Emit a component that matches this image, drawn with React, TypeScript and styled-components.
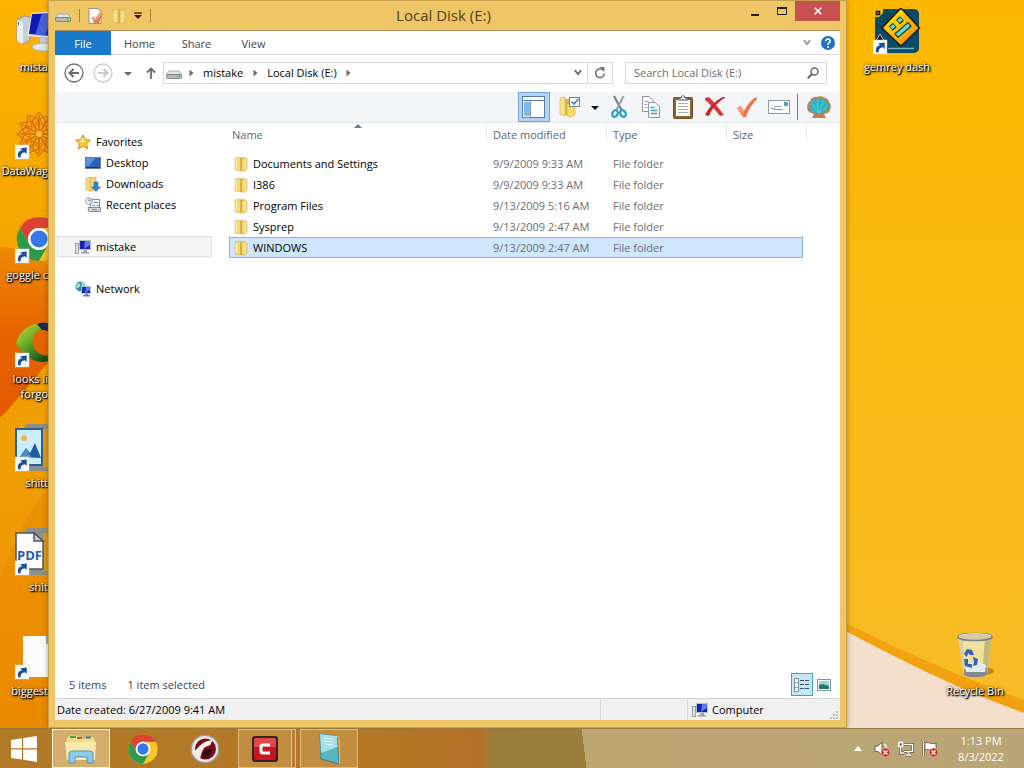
import React from "react";
import styled, { createGlobalStyle, css } from "styled-components";

const FONT = `"Open Sans", "Noto Sans", sans-serif`;

const GlobalStyle = createGlobalStyle`
  *, *::before, *::after { box-sizing: border-box; }
  html, body, #root { height: 100%; }
  body { margin: 0; overflow: hidden; font-family: ${FONT}; font-size: 11px; line-height: 15px; color: #000; }
  button, input { font: inherit; color: inherit; }
  button { border: 0; padding: 0; background: none; display: flex; align-items: center; justify-content: center; }
  a { color: inherit; text-decoration: none; }
  svg { display: block; flex: none; }
`;

/* ---------- desktop ---------- */

const Screen = styled.div`
  height: 100vh;
  display: flex;
  flex-direction: column;
  position: relative;
`;

const Wallpaper = styled.svg`
  position: absolute;
  inset: 0;
  width: 100%;
  height: 100%;
`;

const Desktop = styled.div`
  flex: 1;
  min-height: 0;
  display: flex;
  position: relative;
`;

const LeftIcons = styled.div`
  width: 48px;
  flex: none;
  overflow: hidden;
`;

const RightIcons = styled.div`
  flex: none;
  display: grid;
  grid-template-columns: 78px 78px;
  grid-auto-rows: 104px;
  padding: 0 10px 0 11px;
`;

const Shortcut = styled.a<{ $column?: number; $row?: number }>`
  display: flex;
  flex-direction: column;
  gap: 3px;
  height: 104px;
  padding-top: 8px;
  color: #fff;
  ${(p) => p.$column && css`grid-column: ${p.$column};`}
  ${(p) => p.$row && css`grid-row: ${p.$row};`}
`;

const ClippedShortcut = styled(Shortcut)`
  padding-left: 15px;
  align-items: flex-start;
`;

const CentredShortcut = styled(Shortcut)`
  align-items: center;
`;

const ShortcutLabel = styled.span`
  white-space: pre;
  text-align: center;
  text-shadow: 1px 1px 1px #000, 1px 1px 2px #000, 0 0 3px rgba(0, 0, 0, 0.7);
`;

const EdgeLabel = styled(ShortcutLabel)`
  align-self: flex-end;
  text-align: right;
`;

/* ---------- window ---------- */

const Window = styled.main`
  flex: 1;
  min-width: 0;
  display: flex;
  flex-direction: column;
  padding: 0 6px 7px;
  background: #efc666;
  border: 1px solid #c9a04a;
  box-shadow: 0 0 5px rgba(90, 50, 0, 0.45);
`;

const TitleBar = styled.header`
  height: 29px;
  flex: none;
  display: grid;
  grid-template-columns: 1fr auto 1fr;
`;

const QuickAccess = styled.div`
  display: flex;
  align-items: center;
  gap: 8px;
`;

const QuickDivider = styled.span`
  width: 1px;
  height: 13px;
  background: #a9813a;
`;

const Title = styled.h1`
  margin: 0;
  padding-right: 8px;
  font-size: 15px;
  font-weight: 400;
  line-height: 28px;
  color: #54401f;
`;

const WindowControls = styled.div`
  display: flex;
  justify-content: flex-end;
  align-items: flex-start;
`;

const WindowButton = styled.button<{ $close?: boolean }>`
  width: ${(p) => (p.$close ? 45 : 27)}px;
  height: 20px;
  background: ${(p) => (p.$close ? "#c75050" : "none")};
`;

const Content = styled.div`
  flex: 1;
  min-height: 0;
  display: flex;
  flex-direction: column;
  background: #fff;
  border-top: 1px solid #b0905a;
`;

const TabRow = styled.nav`
  height: 24px;
  flex: none;
  display: flex;
  border-bottom: 1px solid #dadbdc;
`;

const Tab = styled.button<{ $file?: boolean }>`
  width: ${(p) => (p.$file ? 56 : 57)}px;
  height: ${(p) => (p.$file ? 24 : 25)}px;
  color: ${(p) => (p.$file ? "#fff" : "#444")};
  background: ${(p) => (p.$file ? "#1979ca" : "none")};
`;

const TabTools = styled.div`
  margin-left: auto;
  padding-right: 5px;
  display: flex;
  align-items: center;
  gap: 10px;
`;

const NavRow = styled.div`
  flex: none;
  display: flex;
  align-items: center;
  height: 37px;
  padding: 0 13px 2px 8px;
`;

const NavButtons = styled.div`
  display: flex;
  gap: 7px;
  margin-right: 3px;
`;

const NavButton = styled.button<{ $width: number }>`
  width: ${(p) => p.$width}px;
  height: 22px;
`;

const AddressBar = styled.div`
  flex: 1;
  min-width: 0;
  height: 22px;
  display: flex;
  align-items: center;
  padding-left: 2px;
  border: 1px solid #d9d9d9;
`;

const Crumb = styled.button`
  padding: 0 3px;
  height: 20px;
  white-space: nowrap;
`;

const CrumbArrow = styled.span`
  width: 18px;
  display: flex;
  justify-content: center;
`;

const AddressTools = styled.div`
  margin-left: auto;
  display: flex;
`;

const AddressButton = styled.button<{ $divided?: boolean }>`
  width: ${(p) => (p.$divided ? 25 : 19)}px;
  height: 20px;
  border-left: ${(p) => (p.$divided ? "1px solid #d9d9d9" : "0")};
`;

const SearchBox = styled.label`
  width: 202px;
  height: 22px;
  margin-left: 12px;
  display: flex;
  align-items: center;
  padding: 0 7px 0 8px;
  border: 1px solid #d9d9d9;
`;

const SearchInput = styled.input`
  flex: 1;
  min-width: 0;
  border: 0;
  padding: 0;
  outline: 0;
  background: none;
  &::placeholder { color: #6d6d6d; opacity: 1; }
`;

const ToolBar = styled.div`
  height: 31px;
  flex: none;
  display: flex;
  justify-content: flex-end;
  align-items: center;
  padding-right: 5px;
  background: #f4f5f7;
  border-bottom: 1px solid #e3e8ee;
`;

const ToolButton = styled.button<{ $active?: boolean }>`
  width: 32px;
  height: 30px;
  border: 1px solid ${(p) => (p.$active ? "#6ba3dc" : "transparent")};
  background: ${(p) => (p.$active ? "#b5d3f5" : "none")};
`;

const SplitButton = styled.button`
  width: 53px;
  height: 30px;
  gap: 10px;
  padding-left: 5px;
`;

const ToolDivider = styled.span`
  width: 1px;
  height: 26px;
  margin: 0 5px 0 2px;
  background: #777;
`;

const Panes = styled.div`
  flex: 1;
  min-height: 0;
  display: flex;
`;

const Sidebar = styled.nav`
  width: 174px;
  flex: none;
  padding: 8px 17px 0 2px;
  display: flex;
  flex-direction: column;
  gap: 21px;
`;

const PlaceGroup = styled.div`
  display: flex;
  flex-direction: column;
`;

const Place = styled.a<{ $nested?: boolean; $current?: boolean }>`
  height: 21px;
  display: flex;
  align-items: center;
  gap: 5px;
  padding-left: ${(p) => (p.$nested ? 27 : 17)}px;
  border: 1px solid ${(p) => (p.$current ? "#dedede" : "transparent")};
  background: ${(p) => (p.$current ? "#f5f5f5" : "none")};
`;

const Listing = styled.section`
  flex: 1;
  min-width: 0;
`;

const FileTable = styled.table`
  width: 578px;
  table-layout: fixed;
  border-collapse: collapse;
`;

const HeadCell = styled.th<{ $width: number; $sorted?: boolean; $open?: boolean }>`
  position: relative;
  width: ${(p) => p.$width}px;
  height: 30px;
  padding: 0 0 0 ${(p) => (p.$sorted ? 3 : 6)}px;
  vertical-align: top;
  text-align: left;
  font-weight: 400;
  line-height: 24px;
  color: #5a6473;
  ${(p) => !p.$open && css`background: linear-gradient(#e4e8ed, #e4e8ed) right top / 1px 16px no-repeat;`}
`;

const EndCell = styled.td<{ $width: number }>`
  width: ${(p) => p.$width}px;
  padding: 0;
  background: linear-gradient(#e4e8ed, #e4e8ed) right top / 1px 16px no-repeat;
`;

const SortMark = styled.svg`
  position: absolute;
  top: 1px;
  left: 50%;
  transform: translateX(-50%);
`;

const Cell = styled.td`
  padding: 0 0 0 6px;
  color: #6d6d6d;
  white-space: nowrap;
`;

const NameCell = styled(Cell)`
  padding-left: 5px;
  color: #000;
`;

const FileRow = styled.tr<{ $selected?: boolean }>`
  height: 21px;
  ${(p) =>
    p.$selected &&
    css`
      ${Cell} {
        background: #cee6ff;
        box-shadow: inset 0 1px #84b4e0, inset 0 -1px #84b4e0;
      }
      ${Cell}:first-child { box-shadow: inset 0 1px #84b4e0, inset 0 -1px #84b4e0, inset 1px 0 #84b4e0; }
      ${Cell}:last-child { box-shadow: inset 0 1px #84b4e0, inset 0 -1px #84b4e0, inset -1px 0 #84b4e0; }
    `}
`;

const FileName = styled.span`
  display: flex;
  align-items: center;
  gap: 5px;
`;

const DetailsRow = styled.div`
  height: 25px;
  flex: none;
  display: flex;
  align-items: center;
  gap: 21px;
  padding: 0 5px 2px 14px;
  color: #34445c;
`;

const ViewSwitch = styled.div`
  margin-left: auto;
  display: flex;
`;

const ViewButton = styled.button<{ $active?: boolean }>`
  width: 22px;
  height: 23px;
  border: 1px solid ${(p) => (p.$active ? "#3aa3cf" : "transparent")};
  background: ${(p) => (p.$active ? "#c4e6f5" : "none")};
`;

const StatusBar = styled.footer`
  height: 22px;
  flex: none;
  display: flex;
  background: #f0f0f0;
  border-top: 1px solid #d5d5d5;
`;

const StatusField = styled.div<{ $width?: number }>`
  flex: ${(p) => (p.$width ? `0 0 ${p.$width}px` : "1")};
  display: flex;
  align-items: center;
  gap: 4px;
  padding-left: ${(p) => (p.$width ? 4 : 2)}px;
  border-left: ${(p) => (p.$width ? "1px solid #d7d7d7" : "0")};
`;

const SizeGrip = styled.svg`
  margin: auto 1px 0 auto;
`;

/* ---------- taskbar ---------- */

const TaskBar = styled.footer`
  height: 40px;
  flex: none;
  position: relative;
  display: flex;
  align-items: stretch;
  color: #fff;
  border-top: 1px solid #96793f;
  background:
    linear-gradient(83deg, transparent 57%, #bda673 57%, #b9a577 100%),
    linear-gradient(90deg, #b17a26 0, #b37827 36%, #b46f26 47%, #9b7e3b 48%, #9c7f3d 100%);
`;

const StartButton = styled.button`
  width: 48px;
  margin-right: 4px;
`;

const TaskButtons = styled.div`
  display: flex;
  gap: 4px;
`;

const TaskButton = styled.button<{ $state?: "active" | "open" | "stacked" }>`
  width: 58px;
  border: 1px solid transparent;
  ${(p) =>
    p.$state === "active" &&
    css`
      border-color: #fff3d8;
      background: rgba(255, 236, 200, 0.45);
    `}
  ${(p) =>
    (p.$state === "open" || p.$state === "stacked") &&
    css`
      border-color: rgba(255, 226, 170, 0.55);
      background: rgba(255, 226, 170, 0.2);
    `}
  ${(p) =>
    p.$state === "stacked" &&
    css`
      box-shadow: inset -3px 0 0 rgba(176, 120, 50, 0.9), inset -4px 0 0 rgba(255, 226, 170, 0.6);
      padding-right: 4px;
    `}
`;

const Tray = styled.div`
  margin-left: auto;
  display: flex;
  align-items: center;
`;

const TrayIcons = styled.div`
  display: flex;
  gap: 8px;
`;

const TrayButton = styled.button`
  width: 16px;
  height: 24px;
`;

const Clock = styled.time`
  width: 86px;
  text-align: center;
  line-height: 16px;
`;

/* ---------- drawings ---------- */

const Arrow = ({ y = 33 }: { y?: number }) => (
  <g transform={`translate(0 ${y})`}>
    <rect width="14" height="14" fill="#fbfbf8" stroke="#d8d8d8" strokeWidth=".5" />
    <path d="M3.2 12.2C2.2 8.2 4 5.6 7 5.3L5.4 3.2 11.8 2.4 11.6 9 9.8 7.2C7 7.6 5.4 9 5.6 12.4Z" fill="#1d4f9c" />
  </g>
);

const ComputerBig = () => (
  <svg width="48" height="48" viewBox="0 0 48 48">
    <path d="M2 12 9 8 15 9V32L8 36 2 33Z" fill="#c9ced3" stroke="#8f979e" />
    <path d="M2 12 8 14V36L2 33Z" fill="#eceff1" />
    <path d="M3.500 14v3" stroke="#456" />
    <path d="M16 5 46 3V31L12 28Z" fill="#dbe6f2" />
    <path d="M17 6 45 5V29L14 26Z" fill="#1119b5" />
    <path d="M27 5 38 5 30 28 20 27Z" fill="#5a78ea" opacity=".75" />
    <path d="M25 30h9v8h-9z" fill="#c4ccd3" />
    <ellipse cx="29" cy="39" rx="12" ry="4" fill="#dfe5e9" stroke="#a8b0b6" />
  </svg>
);

const Mandala = () => (
  <svg width="48" height="48" viewBox="0 0 48 48">
    <g fill="none" stroke="#d9701a" strokeWidth="1.300">
      {[0, 30, 60, 90, 120, 150, 180, 210, 240, 270, 300, 330].map((a) => (
        <g key={a} transform={`rotate(${a} 24 22)`}>
          <path d="M24 22 17 9 24 0 31 9Z" />
          <path d="M24 14 14 6M24 14 34 6" strokeWidth=".9" />
        </g>
      ))}
    </g>
    <circle cx="24" cy="22" r="3" fill="#ffc62a" />
    <Arrow />
  </svg>
);

const ChromeShapes = () => (
  <>
    <circle cx="24" cy="24" r="22" fill="#f9c62b" />
    <path d="M4.900 13A22 22 0 0 1 43.100 13L24 13A11 11 0 0 0 14.500 29.500Z" fill="#dd4236" />
    <path d="M4.900 13 14.500 29.500A11 11 0 0 0 33.500 29.500L24 46A22 22 0 0 1 4.900 13Z" fill="#2c9a4b" />
    <circle cx="24" cy="24" r="11" fill="#fff" />
    <circle cx="24" cy="24" r="8.500" fill="#3479e8" />
  </>
);

const ChromeBig = () => (
  <svg width="48" height="48" viewBox="0 0 48 48">
    <g transform="translate(0 -1)"><ChromeShapes /></g>
    <Arrow />
  </svg>
);

const Swirl = () => (
  <svg width="48" height="48" viewBox="0 0 48 48">
    <defs>
      <linearGradient id="swirl" x1="0" y1="0" x2="1" y2="1">
        <stop offset="0" stopColor="#e6dc3c" />
        <stop offset=".35" stopColor="#6db12b" />
        <stop offset=".8" stopColor="#0c4a1c" />
      </linearGradient>
    </defs>
    <path d="M1 24C4 10 16 3 28 3 38 3 46 12 46 22 46 34 36 43 26 42 14 41 8 32 1 24ZM29 9C20 10 16 17 18 25 20 33 28 37 36 35 42 31 42 17 36 11Z" fill="url(#swirl)" fillRule="evenodd" />
    <path d="M22 4C30 1 42 3 46 14L40 20C37 13 33 10 27 10Z" fill="#132a5c" />
    <Arrow />
  </svg>
);

const PictureFile = () => (
  <svg width="48" height="48" viewBox="0 0 48 48">
    <path d="M9 3 14 -1H48V47H12Z" fill="#8f8d87" />
    <path d="M28 5H48V43H28Z" fill="#dd981c" />
    <rect x="1" y="5" width="26" height="36" fill="#c8effb" stroke="#2c5f8f" strokeWidth="2" />
    <circle cx="9" cy="14" r="3" fill="#f3b252" />
    <path d="M5 33 11 24 15 29 20 19 26 34Z" fill="#1e5fa0" />
    <path d="M5 33 11 24 16 33Z" fill="#4a8bc6" />
    <Arrow />
  </svg>
);

const PdfText = styled.text`
  font: 700 13px ${FONT};
  fill: #1e5fa8;
`;

const PdfFile = () => (
  <svg width="48" height="48" viewBox="0 0 48 48">
    <path d="M9 3 14 -1H48V47H12Z" fill="#8f8d87" />
    <path d="M28 5H48V43H28Z" fill="#dd981c" />
    <path d="M1 5H19L28 13V41H1Z" fill="#fdfdfd" stroke="#4b5563" strokeWidth="1.500" />
    <path d="M19 5V13H28Z" fill="#c5cad0" stroke="#4b5563" strokeWidth="1.500" />
    <PdfText x="2" y="32">PDF</PdfText>
    <Arrow />
  </svg>
);

const BlankFile = () => (
  <svg width="48" height="48" viewBox="0 0 48 48">
    <path d="M8 4H40V45H8Z" fill="#fbfbfb" />
    <path d="M31 4h3v8h-3z" fill="#a0a5a8" />
    <Arrow />
  </svg>
);

const DashGame = () => (
  <svg width="48" height="48" viewBox="0 0 48 48">
    <defs>
      <linearGradient id="dash" x1="0" y1="0" x2="1" y2="1">
        <stop offset=".3" stopColor="#ffd400" />
        <stop offset="1" stopColor="#ff7d1e" />
      </linearGradient>
    </defs>
    <rect x="2" y="1" width="44" height="44" rx="5" fill="#0e4a63" />
    <path d="M2 18h44M14 1v44" stroke="#0a3549" />
    <path d="M2 1H10V5L6 9H2Z" fill="#f3b91c" />
    <path d="M3.500 3.500H6.500V6.500H3.500Z" fill="none" stroke="#111" strokeWidth="1.500" />
    <path d="M28 0 46.500 20 28 38 9 20Z" fill="url(#dash)" stroke="#1d1d1d" strokeWidth="1.500" />
    <g fill="none" stroke="#1b3c3c" strokeWidth="6">
      <path d="M17.700 20.500 21.700 17M25 14 29 10.500M23 28 37 16" />
    </g>
    <g fill="none" stroke="#5fe0d0" strokeWidth="3.500">
      <path d="M18.200 20 21.200 17.500M25.500 13.500 28.500 11M24 27.200 36 16.800" />
    </g>
    <path d="M7 26 3 33H11Z" fill="#111" stroke="#fff" strokeWidth=".7" />
    <path d="M15 40.500h26" stroke="#6cb6d0" strokeWidth="1.500" />
    <Arrow y={32} />
  </svg>
);

const Bin = () => (
  <svg width="48" height="48" viewBox="0 0 48 48">
    <ellipse cx="32" cy="39" rx="11" ry="4" fill="#6a520c" opacity=".45" />
    <path d="M7 5H41L36 43C31 46 17 46 13 43Z" fill="#f0e09a" />
    <path d="M34 6H41L36 43 31 45Z" fill="#c3b878" />
    <path d="M7 5H11L16 44 13 43Z" fill="#d6cfa6" />
    <path d="M13 37 36 36 36 43C31 46 17 46 13 43Z" fill="#828b92" />
    <path d="M14 34C20 29 30 30 35 33L34 40H15Z" fill="#e3eaf0" />
    <ellipse cx="24" cy="5" rx="17" ry="3.500" fill="#d2cda6" stroke="#7a8286" strokeWidth="1.500" />
    <path d="M8 4C14 1 34 1 40 4" stroke="#f4f5f0" fill="none" />
    <path d="M13 22 16 17 21 18 23 23 19 23 17 21 16 25ZM22 25 27 27 26 33 22 34 23 30ZM13 27 17 27 17 32 21 32V36L14 34Z" fill="#2f62c4" />
  </svg>
);

const Drive = () => (
  <svg width="16" height="16" viewBox="0 0 16 16">
    <path d="M3 6H13L15.500 9.500H.500Z" fill="#e4e6e6" stroke="#9aa0a0" strokeWidth=".8" />
    <rect x=".5" y="9.500" width="15" height="4" rx="1" fill="#b4bab9" stroke="#6f7675" strokeWidth=".8" />
    <rect x="11" y="10.500" width="3" height="2" fill="#59c46a" />
  </svg>
);

const Folder = () => (
  <svg width="14" height="16" viewBox="0 0 14 16">
    <path d="M1 2 7 1V15L1 14Z" fill="#f3d874" stroke="#dcb850" strokeWidth=".6" />
    <path d="M6 1.500H10V15H6Z" fill="#dcb145" />
    <path d="M8 3 11 1.500 13 3V13L10 15.500 8 14.500Z" fill="#f5df8c" stroke="#cfa94a" strokeWidth=".6" />
    <path d="M2.500 3V13" stroke="#fdf0b4" strokeWidth="1.500" />
  </svg>
);

const CheckedPage = () => (
  <svg width="16" height="16" viewBox="0 0 16 16">
    <path d="M1 .5H10L13 4V15.500H1Z" fill="#fff" stroke="#9a8f86" />
    <path d="M4 10 7 13 15 5 11 15H6Z" fill="#e57846" />
    <path d="M4 9 7 12 14 3" stroke="#ef9a72" strokeWidth="2" fill="none" />
  </svg>
);

const DownMark = ({ bar, color = "#333" }: { bar?: boolean; color?: string }) => (
  <svg width="8" height="8" viewBox="0 0 8 8">
    {bar && <path d="M0 1h8" stroke={color} strokeWidth="1.300" />}
    <path d="M0 3H8L4 7Z" fill={color} />
  </svg>
);

const Chevron = ({ color = "#888" }: { color?: string }) => (
  <svg width="8" height="7" viewBox="0 0 8 7">
    <path d="M.8 1.200 4 5 7.200 1.200" stroke={color} strokeWidth="1.800" fill="none" />
  </svg>
);

const RightMark = () => (
  <svg width="5" height="8" viewBox="0 0 5 8">
    <path d="M.5.5V7.500L4.500 4Z" fill="#6a6a6a" />
  </svg>
);

const CircleArrow = ({ color, flip }: { color: string; flip?: boolean }) => (
  <svg width="20" height="20" viewBox="0 0 20 20">
    <g transform={flip ? "rotate(180 10 10)" : undefined} fill="none" stroke={color}>
      <circle cx="10" cy="10" r="9" strokeWidth="1.300" />
      <path d="M15 10H6M9.500 6 5.500 10 9.500 14" strokeWidth="2" />
    </g>
  </svg>
);

const UpArrow = () => (
  <svg width="10" height="12" viewBox="0 0 10 12">
    <path d="M5 12V1.500M1 5.500 5 1.500 9 5.500" stroke="#6b6b6b" strokeWidth="1.800" fill="none" />
  </svg>
);

const Refresh = () => (
  <svg width="12" height="12" viewBox="0 0 12 12">
    <path d="M9.500 3.500A4.400 4.400 0 1 0 10.400 6.500" stroke="#767676" strokeWidth="1.600" fill="none" />
    <path d="M5.500 0H10.500V5Z" fill="#767676" />
  </svg>
);

const Magnifier = () => (
  <svg width="12" height="12" viewBox="0 0 12 12">
    <circle cx="7.500" cy="4.500" r="3.500" stroke="#666" strokeWidth="1.500" fill="none" />
    <path d="M5 7 .8 11.200" stroke="#666" strokeWidth="2" />
  </svg>
);

const Help = () => (
  <svg width="14" height="14" viewBox="0 0 14 14">
    <circle cx="7" cy="7" r="7" fill="#1f72bd" />
    <path d="M4.800 5.300C4.900 2.300 9.300 2.500 9.200 5.100 9.100 6.700 7 6.700 7 8.800" stroke="#fff" strokeWidth="1.500" fill="none" />
    <circle cx="7" cy="11" r="1" fill="#fff" />
  </svg>
);

const PaneIcon = () => (
  <svg width="24" height="22" viewBox="0 0 24 22">
    <rect x=".5" y=".5" width="22" height="21" fill="#fff" stroke="#5b7ea6" />
    <path d="M1 4.500H22" stroke="#5b7ea6" />
    <rect x="2" y="6" width="6" height="14" fill="#7db8ee" />
    <path d="M8.500 5V21" stroke="#8aa4c0" />
  </svg>
);

const FolderOptions = () => (
  <svg width="22" height="22" viewBox="0 0 22 22">
    <path d="M1 2 6 1V20L1 18Z" fill="#f6e38e" stroke="#d5b54f" strokeWidth=".6" />
    <path d="M6 3H14V19H6Z" fill="#dcb348" />
    <path d="M8 8 16 5V19L11 21 8 20Z" fill="#f4dc6c" stroke="#d2ae3b" strokeWidth=".6" />
    <rect x="10.500" y="1.500" width="10" height="9" fill="#fff" stroke="#6b7f93" />
    <path d="M12.500 5.500 15 8 19.500 3" stroke="#2d7fc0" strokeWidth="1.600" fill="none" />
  </svg>
);

const Scissors = () => (
  <svg width="16" height="24" viewBox="0 0 16 24">
    <path d="M3 1 10.500 15" stroke="#75818c" strokeWidth="2.200" />
    <path d="M12.500 1 5.500 15" stroke="#9aa5ae" strokeWidth="2.200" />
    <g fill="none" stroke="#2aa0c8" strokeWidth="2.300">
      <ellipse cx="4" cy="18.500" rx="2.600" ry="3.500" transform="rotate(25 4 18.500)" />
      <ellipse cx="12" cy="18.500" rx="2.600" ry="3.500" transform="rotate(-25 12 18.500)" />
    </g>
  </svg>
);

const CopyPages = () => (
  <svg width="20" height="22" viewBox="0 0 20 22">
    <g fill="#fdfdfd" stroke="#8b959e">
      <path d="M1.500.5H8L12 4V15.500H1.500Z" />
      <path d="M7.500 6.500H14L18.500 10.500V21.500H7.500Z" />
    </g>
    <path d="M3.500 5.500h4M3.500 8.500h3M3.500 11.500h3" stroke="#9aa7b1" />
    <path d="M9.500 11.500h4M9.500 14.500h7M9.500 17.500h7" stroke="#3d9fb8" strokeWidth="1.300" />
  </svg>
);

const Clipboard = () => (
  <svg width="20" height="24" viewBox="0 0 20 24">
    <rect x=".5" y="2.500" width="19" height="21" rx="1" fill="#8f6430" stroke="#6e4a20" />
    <rect x="3" y="5" width="14" height="16" fill="#fbfbf6" />
    <path d="M5 8.500h10M5 11.500h10M5 14.500h10M5 17.500h10" stroke="#a9b0b3" />
    <path d="M5 5V3H8C8 0 12 0 12 3H15V5Z" fill="#dfe3e4" stroke="#4c5357" />
  </svg>
);

const RedCross = () => (
  <svg width="22" height="22" viewBox="0 0 22 22">
    <path d="M1 2 5 1C9 5 15 12 20 19L16 20C11 14 6 8 1 4Z" fill="#da3a3d" />
    <path d="M22 1C15 5 8 12 5 20L1 19C5 11 12 4 19 1Z" fill="#c2262c" />
  </svg>
);

const OrangeCheck = () => (
  <svg width="22" height="22" viewBox="0 0 22 22">
    <path d="M1 12 5 10 8 15C11 9 15 4 20 1L21 3C16 8 12 14 10 21L7 21Z" fill="#ef7446" />
    <path d="M1 12 5 10 8 15 8 20Z" fill="#f59a72" />
  </svg>
);

const Mail = () => (
  <svg width="22" height="14" viewBox="0 0 22 14">
    <rect x=".5" y=".5" width="21" height="13" fill="#fbfcfd" stroke="#8f989f" />
    <rect x="16" y="2" width="4" height="4" fill="#47a7b9" />
    <path d="M3 8.500h4M6 6.500h7M6 9.500h9" stroke="#8e9ca8" />
  </svg>
);

const Shell = () => (
  <svg width="26" height="22" viewBox="0 0 26 22">
    <path d="M8 18 3 16C0 12 1 7 4 5 5 2 9 0 11 1 13 0 16 0 17 1 21 2 23 4 23 6 26 9 25 14 22 17L18 18 20 22H6Z" fill="#b98350" />
    <path d="M9 17 4 14C2 10 4 7 5 6 7 3 9 3 11 3 14 2 16 3 17 4 20 4 22 6 22 8 24 10 23 13 21 14L16 17Z" fill="#2fb5c4" />
    <path d="M12 17 6 7M12.500 17 11 4M13 17 17 5M13.500 17 21 10" stroke="#6fd6da" strokeWidth=".6" />
  </svg>
);

const Star = () => (
  <svg width="16" height="16" viewBox="0 0 16 16">
    <path d="M8 .8 10.200 5.600 15.400 6.200 11.500 9.600 12.700 15 8 12.200 3.300 15 4.500 9.600.6 6.200 5.800 5.600Z" fill="#ffc83a" stroke="#e08a1e" />
    <path d="M8 3.500 9.300 6.800 8 9 5 7Z" fill="#fff1b5" />
  </svg>
);

const Screenlet = () => (
  <svg width="16" height="16" viewBox="0 0 16 16">
    <rect x=".5" y="2.500" width="15" height="11" fill="#2a62b8" stroke="#6a7f99" />
    <path d="M1 3H10L4 11H1Z" fill="#5790dc" />
    <path d="M1 12.500h14" stroke="#15366e" />
  </svg>
);

const DownloadsIcon = () => (
  <svg width="16" height="16" viewBox="0 0 16 16">
    <path d="M1 2 6 1V15L1 14Z" fill="#f6dc83" stroke="#cfa848" strokeWidth=".6" />
    <path d="M5 2 11 1V13L7 15 5 14Z" fill="#f2d476" stroke="#cfa848" strokeWidth=".6" />
    <path d="M9 6H13V11H15.500L11 15.500 6.500 11H9Z" fill="#2c86cf" stroke="#1a5c9a" strokeWidth=".5" />
  </svg>
);

const RecentIcon = () => (
  <svg width="16" height="16" viewBox="0 0 16 16">
    <path d="M5.500 2.500H14.500V12.500H5.500Z" fill="#f4f7f9" stroke="#7f8c97" />
    <path d="M3 10.500H15.500V14.500H4Z" fill="#cfd8de" stroke="#7f8c97" />
    <path d="M9 5.500h4M8 8.500h2M12 8.500h2M7 12.500h5" stroke="#4f91b5" />
    <circle cx="4" cy="4" r="3.300" fill="#fff" stroke="#8c969d" />
    <path d="M4 2V4H6" stroke="#555" fill="none" strokeWidth=".8" />
  </svg>
);

const PcIcon = () => (
  <svg width="16" height="16" viewBox="0 0 16 16">
    <rect x=".5" y="4.500" width="3" height="10" fill="#dfe3e5" stroke="#868e93" strokeWidth=".8" />
    <rect x="4.500" y="1.500" width="11" height="9" fill="#1a1fb0" stroke="#b7bfc8" />
    <path d="M10 2H15V6L9 10Z" fill="#5c7ce4" />
    <path d="M8.500 11H12V13H8.500ZM6 13H14V14.500H6Z" fill="#9aa2a8" />
  </svg>
);

const NetworkIcon = () => (
  <svg width="16" height="16" viewBox="0 0 16 16">
    <circle cx="5.500" cy="5.500" r="5" fill="#2596ad" />
    <path d="M2 3C4 1 6 3 5 5S2 8 1 6ZM6 1C8 1 10 3 10 5H7Z" fill="#a5dcc8" />
    <rect x="6.500" y="5.500" width="9" height="7" fill="#1a2ab4" stroke="#b7c3d3" />
    <path d="M11 6H15V9L10 12Z" fill="#5c7ce4" />
    <path d="M10 13H13V14H15V15.500H8V14H10Z" fill="#6f7f8e" />
  </svg>
);

const DetailsView = () => (
  <svg width="16" height="14" viewBox="0 0 16 14">
    <path d="M.5.5H4.500V13.500H.500ZM.5 4.800H4.500M.5 9.200H4.500" fill="#fff" stroke="#7a8fa0" />
    <path d="M6 2.500h4M11 2.500h4M6 6.500h4M11 6.500h4M6 10.500h4M11 10.500h4" stroke="#34586f" />
  </svg>
);

const ThumbView = () => (
  <svg width="14" height="12" viewBox="0 0 14 12">
    <rect x=".5" y=".5" width="13" height="11" fill="#fff" stroke="#8095a3" />
    <rect x="2" y="2" width="10" height="8" fill="#9ed5e6" />
    <path d="M2 6 6 5 12 7V10H2Z" fill="#27756a" />
  </svg>
);

const WindowsLogo = () => (
  <svg width="28" height="28" viewBox="0 0 28 28">
    <path d="M1 5 12 3.300V13.300H1ZM13.200 3.100 27 1V13.300H13.200ZM1 14.500H12V24.600L1 23ZM13.200 14.500H27V26.900L13.200 24.800Z" fill="#fff" />
  </svg>
);

const ExplorerIcon = () => (
  <svg width="34" height="30" viewBox="0 0 34 30">
    <path d="M2 4 6 1H14L16 4H24L28 2 31 5V26H2Z" fill="#f1dc8a" stroke="#cfa950" strokeWidth=".8" />
    <path d="M6 3H12" stroke="#4a9f55" strokeWidth="2" />
    <path d="M13 4H18" stroke="#c25a43" strokeWidth="2" />
    <path d="M22 3.500H27" stroke="#3e7fb8" strokeWidth="2" />
    <path d="M1 8H32L31 26H3Z" fill="#f8ebaa" />
    <path d="M5 29V20C5 17 7 17 9 17H25C28 17 29 18 29 20V29H23V23H11V29Z" fill="#8cc9ea" stroke="#4c93c2" />
  </svg>
);

const ChromeSmall = () => (
  <svg width="32" height="32" viewBox="0 0 48 48"><ChromeShapes /></svg>
);

const Dragon = () => (
  <svg width="30" height="30" viewBox="0 0 30 30">
    <circle cx="15" cy="15" r="14.500" fill="#a29a98" />
    <circle cx="15" cy="15" r="13" fill="#ece8e6" />
    <circle cx="15.500" cy="15" r="10.500" fill="#7b0e1e" />
    <path d="M2 19C8 16 10 7 23 6 20 9 22 11 18 12 13 13 12 17 10 25Z" fill="#f2eded" />
    <path d="M13 25C12 18 16 15 22 14 23 18 19 24 13 25Z" fill="#2b060c" />
  </svg>
);

const RedC = () => (
  <svg width="28" height="28" viewBox="0 0 28 28">
    <rect x="1" y="1" width="26" height="26" rx="3" fill="#3b2020" />
    <rect x="3" y="3" width="22" height="22" rx="2" fill="#c8161f" />
    <path d="M3 5Q3 3 5 3H23Q25 3 25 5V12H3Z" fill="#e2474a" />
    <path d="M19 10H12Q10 10 10 12V16Q10 18 12 18H19" fill="none" stroke="#fff" strokeWidth="3" />
  </svg>
);

const Notebook = () => (
  <svg width="22" height="32" viewBox="0 0 22 32">
    <path d="M2 1 19 3 21 31 3 26Z" fill="#58b5bf" stroke="#2f7f8b" />
    <path d="M2 1 19 3 19.500 14 3 20Z" fill="#a5dfe3" />
    <path d="M6 5 15 6M6 8 15 9M7 11 15 12" stroke="#dff6f7" />
    <path d="M19 3 21 4 21.500 31" stroke="#d8c37c" fill="none" />
  </svg>
);

const RedBadge = () => (
  <>
    <circle cx="11.500" cy="11.500" r="4.500" fill="#cf2f33" stroke="#f2dcd4" strokeWidth=".6" />
    <path d="M9.500 9.500 13.500 13.500M13.500 9.500 9.500 13.500" stroke="#fff" strokeWidth="1.300" />
  </>
);

const TrayUp = () => (
  <svg width="8" height="5" viewBox="0 0 8 5"><path d="M0 5 4 0 8 5Z" fill="#fff" /></svg>
);

const Speaker = () => (
  <svg width="16" height="16" viewBox="0 0 16 16">
    <path d="M1 5H4L8 1V14L4 10.500H1Z" fill="#fff" stroke="#5b4a2c" strokeWidth=".8" />
    <path d="M10 3C12 4 12.500 5.500 12.500 7" fill="none" stroke="#fff" strokeWidth="1.200" />
    <RedBadge />
  </svg>
);

const Wired = () => (
  <svg width="16" height="16" viewBox="0 0 16 16">
    <g fill="none" stroke="#5b4a2c" strokeWidth="3">
      <path d="M5.500 3.500H14.500V10.500H6M8 14H13M10.500 11V14M2.500 5V12H6" />
    </g>
    <g fill="none" stroke="#fff" strokeWidth="1.500">
      <path d="M5.500 3.500H14.500V10.500H6M8 14H13M10.500 11V14M2.500 5V12H6" />
      <path d="M1 1.500H4.500V5.500H1Z" fill="#6a5a36" />
    </g>
  </svg>
);

const Flag = () => (
  <svg width="16" height="16" viewBox="0 0 16 16">
    <path d="M1.500 0V15" stroke="#5b4a2c" strokeWidth="3" />
    <path d="M3 2C6 0 8 4 14 2V9C9 11 7 7 3 9Z" fill="#fff" stroke="#5b4a2c" strokeWidth=".8" />
    <path d="M1.500 0V15" stroke="#fff" strokeWidth="1.500" />
    <RedBadge />
  </svg>
);

/* ---------- data ---------- */

const leftShortcuts = [
  { label: "mista", icon: <ComputerBig /> },
  { label: "DataWag", icon: <Mandala /> },
  { label: "goggle c", icon: <ChromeBig /> },
  { label: "looks li\nforgo", icon: <Swirl /> },
  { label: "shitt", icon: <PictureFile /> },
  { label: "shit", icon: <PdfFile /> },
  { label: "biggest", icon: <BlankFile /> },
];

const files = [
  { name: "Documents and Settings", modified: "9/9/2009 9:33 AM" },
  { name: "I386", modified: "9/9/2009 9:33 AM" },
  { name: "Program Files", modified: "9/13/2009 5:16 AM" },
  { name: "Sysprep", modified: "9/13/2009 2:47 AM" },
  { name: "WINDOWS", modified: "9/13/2009 2:47 AM", selected: true },
];

const tools = [
  { name: "Cut", icon: <Scissors /> },
  { name: "Copy", icon: <CopyPages /> },
  { name: "Paste", icon: <Clipboard /> },
  { name: "Delete", icon: <RedCross /> },
  { name: "Rename", icon: <OrangeCheck /> },
  { name: "E-mail", icon: <Mail /> },
];

export default function App() {
  return (
    <Screen>
      <GlobalStyle />
      <Wallpaper viewBox="0 0 1024 768" preserveAspectRatio="none" aria-hidden="true">
        <defs>
          <linearGradient id="sky" x1="0" y1="0" x2="0" y2="1">
            <stop offset="0" stopColor="#fcb900" />
            <stop offset="1" stopColor="#f6bc2b" />
          </linearGradient>
          <linearGradient id="west" x1="0" y1="0" x2="0" y2="1">
            <stop offset="0" stopColor="#fdb400" />
            <stop offset=".35" stopColor="#f4a300" />
            <stop offset=".7" stopColor="#ef9a06" />
            <stop offset="1" stopColor="#e98600" />
          </linearGradient>
          <linearGradient id="dune" x1="0" y1="0" x2="0" y2="1">
            <stop offset="0" stopColor="#ef8a05" />
            <stop offset=".5" stopColor="#e66400" />
            <stop offset="1" stopColor="#e35a00" />
          </linearGradient>
          <linearGradient id="edge" x1="0" y1="0" x2="0" y2="1">
            <stop offset="0" stopColor="#f3a30e" />
            <stop offset="1" stopColor="#f0a012" />
          </linearGradient>
        </defs>
        <rect width="1024" height="768" fill="url(#sky)" />
        <rect width="60" height="768" fill="url(#west)" />
        <path d="M0 247C20 248 40 256 60 274V350C40 370 20 398 0 418Z" fill="url(#dune)" />
        <path d="M0 580C16 540 30 500 60 480V768H0Z" fill="#e98b02" opacity=".6" />
        <path d="M840 620C900 650 960 677 1024 700V768H840Z" fill="url(#edge)" />
        <path d="M840 628C900 660 960 690 1024 713V768H840Z" fill="#f3dfca" />
      </Wallpaper>

      <Desktop>
        <LeftIcons>
          {leftShortcuts.map((s) => (
            <ClippedShortcut key={s.label} href="#">
              {s.icon}
              <EdgeLabel>{s.label}</EdgeLabel>
            </ClippedShortcut>
          ))}
        </LeftIcons>

        <Window>
          <TitleBar>
            <QuickAccess>
              <Drive />
              <QuickDivider />
              <CheckedPage />
              <Folder />
              <DownMark bar color="#3a1508" />
              <QuickDivider />
            </QuickAccess>
            <Title>Local Disk (E:)</Title>
            <WindowControls>
              <WindowButton aria-label="Minimize">
                <svg width="8" height="12" viewBox="0 0 8 12"><path d="M0 10h8" stroke="#222" strokeWidth="2" /></svg>
              </WindowButton>
              <WindowButton aria-label="Maximize">
                <svg width="10" height="8" viewBox="0 0 10 8"><path d="M.5 1V7.500H9.500V1" fill="none" stroke="#222" /><path d="M0 1h10" stroke="#222" strokeWidth="2" /></svg>
              </WindowButton>
              <WindowButton $close aria-label="Close">
                <svg width="8" height="8" viewBox="0 0 8 8"><path d="M.7.7 7.300 7.300M7.300.7.7 7.300" stroke="#fff" strokeWidth="1.600" /></svg>
              </WindowButton>
            </WindowControls>
          </TitleBar>

          <Content>
            <TabRow>
              <Tab $file>File</Tab>
              <Tab>Home</Tab>
              <Tab>Share</Tab>
              <Tab>View</Tab>
              <TabTools>
                <button aria-label="Expand the ribbon"><Chevron color="#999" /></button>
                <button aria-label="Help"><Help /></button>
              </TabTools>
            </TabRow>

            <NavRow>
              <NavButtons>
                <NavButton $width={22} aria-label="Back"><CircleArrow color="#6b6b6b" /></NavButton>
                <NavButton $width={22} aria-label="Forward"><CircleArrow color="#c9c9c9" flip /></NavButton>
                <NavButton $width={14} aria-label="Recent locations"><DownMark color="#6b6b6b" /></NavButton>
                <NavButton $width={18} aria-label="Up"><UpArrow /></NavButton>
              </NavButtons>
              <AddressBar>
                <Drive />
                <CrumbArrow><RightMark /></CrumbArrow>
                <Crumb>mistake</Crumb>
                <CrumbArrow><RightMark /></CrumbArrow>
                <Crumb>Local Disk (E:)</Crumb>
                <CrumbArrow><RightMark /></CrumbArrow>
                <AddressTools>
                  <AddressButton aria-label="Previous locations"><Chevron color="#666" /></AddressButton>
                  <AddressButton $divided aria-label="Refresh"><Refresh /></AddressButton>
                </AddressTools>
              </AddressBar>
              <SearchBox>
                <SearchInput type="text" aria-label="Search" placeholder="Search Local Disk (E:)" />
                <Magnifier />
              </SearchBox>
            </NavRow>

            <ToolBar>
              <ToolButton $active aria-label="Navigation pane"><PaneIcon /></ToolButton>
              <SplitButton aria-label="Folder options">
                <FolderOptions />
                <DownMark color="#111" />
              </SplitButton>
              {tools.map((t) => (
                <ToolButton key={t.name} aria-label={t.name}>{t.icon}</ToolButton>
              ))}
              <ToolDivider />
              <ToolButton aria-label="Classic Shell"><Shell /></ToolButton>
            </ToolBar>

            <Panes>
              <Sidebar>
                <PlaceGroup>
                  <Place href="#"><Star />Favorites</Place>
                  <Place href="#" $nested><Screenlet />Desktop</Place>
                  <Place href="#" $nested><DownloadsIcon />Downloads</Place>
                  <Place href="#" $nested><RecentIcon />Recent places</Place>
                </PlaceGroup>
                <PlaceGroup>
                  <Place href="#" $current><PcIcon />mistake</Place>
                </PlaceGroup>
                <PlaceGroup>
                  <Place href="#"><NetworkIcon />Network</Place>
                </PlaceGroup>
              </Sidebar>

              <Listing>
                <FileTable>
                  <thead>
                    <tr>
                      <HeadCell $width={258} $sorted>
                        Name
                        <SortMark width="8" height="4" viewBox="0 0 8 4"><path d="M0 4 4 0 8 4Z" fill="#5f7f95" /></SortMark>
                      </HeadCell>
                      <HeadCell $width={120}>Date modified</HeadCell>
                      <HeadCell $width={120}>Type</HeadCell>
                      <HeadCell $width={76} $open>Size</HeadCell>
                      <EndCell $width={4} />
                    </tr>
                  </thead>
                  <tbody>
                    {files.map((f) => (
                      <FileRow key={f.name} $selected={f.selected}>
                        <NameCell><FileName><Folder />{f.name}</FileName></NameCell>
                        <Cell>{f.modified}</Cell>
                        <Cell>File folder</Cell>
                        <Cell />
                      </FileRow>
                    ))}
                  </tbody>
                </FileTable>
              </Listing>
            </Panes>

            <DetailsRow>
              <span>5 items</span>
              <span>1 item selected</span>
              <ViewSwitch>
                <ViewButton $active aria-label="Details view"><DetailsView /></ViewButton>
                <ViewButton aria-label="Thumbnail view"><ThumbView /></ViewButton>
              </ViewSwitch>
            </DetailsRow>
            <StatusBar>
              <StatusField>Date created: 6/27/2009 9:41 AM</StatusField>
              <StatusField $width={87} />
              <StatusField $width={153}>
                <PcIcon />Computer
                <SizeGrip width="10" height="10" viewBox="0 0 10 10">
                  <path d="M7 1h2v2h-2zM4 4h2v2h-2zM7 4h2v2h-2zM1 7h2v2h-2zM4 7h2v2h-2zM7 7h2v2h-2z" fill="#bdbdbd" />
                </SizeGrip>
              </StatusField>
            </StatusBar>
          </Content>
        </Window>

        <RightIcons>
          <CentredShortcut href="#" $column={1} $row={1}>
            <DashGame />
            <ShortcutLabel>gemrey dash</ShortcutLabel>
          </CentredShortcut>
          <CentredShortcut href="#" $column={2} $row={7}>
            <Bin />
            <ShortcutLabel>Recycle Bin</ShortcutLabel>
          </CentredShortcut>
        </RightIcons>
      </Desktop>

      <TaskBar>
        <StartButton aria-label="Start"><WindowsLogo /></StartButton>
        <TaskButtons>
          <TaskButton $state="active" aria-label="File Explorer"><ExplorerIcon /></TaskButton>
          <TaskButton aria-label="Chrome"><ChromeSmall /></TaskButton>
          <TaskButton aria-label="Dragon"><Dragon /></TaskButton>
          <TaskButton $state="stacked" aria-label="Comodo"><RedC /></TaskButton>
          <TaskButton $state="open" aria-label="Notepad"><Notebook /></TaskButton>
        </TaskButtons>
        <Tray>
          <TrayIcons>
            <TrayButton aria-label="Show hidden icons"><TrayUp /></TrayButton>
            <TrayButton aria-label="Volume"><Speaker /></TrayButton>
            <TrayButton aria-label="Network"><Wired /></TrayButton>
            <TrayButton aria-label="Action Center"><Flag /></TrayButton>
          </TrayIcons>
          <Clock>1:13 PM<br />8/3/2022</Clock>
        </Tray>
      </TaskBar>
    </Screen>
  );
}
